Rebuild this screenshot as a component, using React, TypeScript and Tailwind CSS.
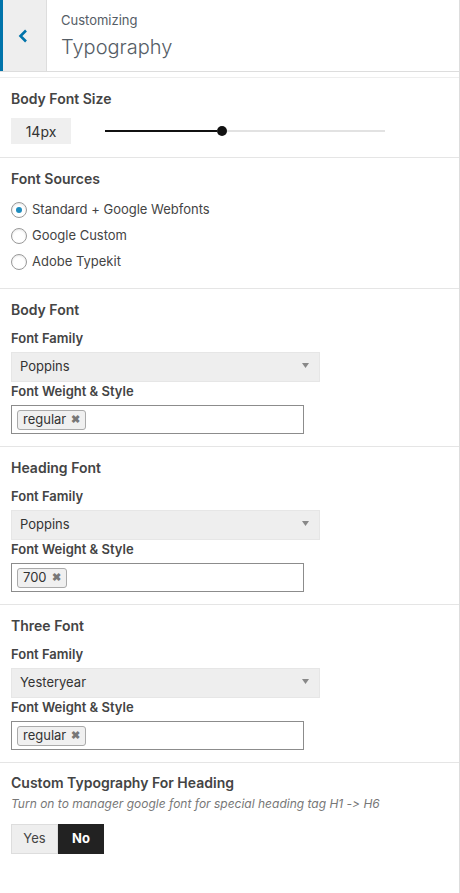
import React from 'react';

const font = { fontFamily: 'Inter, "Liberation Sans", Arial, sans-serif' };

const Tag = ({ label }: { label: string }) => (
  <span className="flex items-center h-[20px] px-[5px] border border-[#aaa] rounded-[3px] bg-[#f0f0f0] text-[13px] text-[#333] leading-none">
    {label}
    <span className="ml-[5px] text-[11px] font-bold text-[#777]">✖</span>
  </span>
);

const FontBlock = ({ title, family, weight }: { title: string; family: string; weight: string }) => (
  <div className="px-[11px] pt-[11px] pb-[12px] border-b border-[#e5e5e5]">
    <div className="text-[14px] leading-[20px] font-semibold text-[#444]">{title}</div>
    <div className="mt-[10px] text-[13px] leading-[16px] font-semibold text-[#444]">Font Family</div>
    <div className="mt-[6px] w-[309px] h-[30px] bg-[#eeeeee] border border-[#e6e6e6] flex items-center justify-between pl-[8px] pr-[10px]">
      <span className="text-[13px] text-[#333]">{family}</span>
      <svg width="7" height="5" viewBox="0 0 7 5" className="-mt-[4px]">
        <path d="M0 0h7L3.5 5z" fill="#888" />
      </svg>
    </div>
    <div className="mt-[1px] text-[13px] leading-[16px] font-semibold text-[#444]">Font Weight &amp; Style</div>
    <div className="mt-[6px] w-[293px] h-[29px] border border-[#8c8c8c] bg-white flex items-center pl-[5px]">
      <Tag label={weight} />
    </div>
  </div>
);

const Radio = ({ label, checked }: { label: string; checked?: boolean }) => (
  <div className="flex items-center h-[26px] pt-[1px]">
    <span className="w-[16px] h-[16px] rounded-full border border-[#999] bg-white flex items-center justify-center shadow-[inset_0_1px_2px_rgba(0,0,0,0.1)]">
      {checked && <span className="w-[6px] h-[6px] rounded-full bg-[#1e8cbe]" />}
    </span>
    <span className="ml-[5px] text-[13px] text-[#444]">{label}</span>
  </div>
);

export default function App() {
  return (
    <div style={font} className="w-[460px] h-[893px] bg-white border-r border-[#ddd] overflow-hidden [font-variant-ligatures:none]">
      {/* header */}
      <div className="h-[72px] flex border-b border-[#ddd]">
        <div className="w-[47px] bg-[#eeeeee] border-l-[3px] border-[#0073aa] border-r border-r-[#ddd] flex items-center justify-center pr-[3px]">
          <svg width="10" height="14" viewBox="0 0 10 14">
            <path d="M8 1.5L2.5 7L8 12.5" fill="none" stroke="#0073aa" strokeWidth="2.6" />
          </svg>
        </div>
        <div className="pl-[14px] pt-[11px]">
          <div className="text-[13px] leading-[18px] text-[#555d66]">Customizing</div>
          <div className="mt-[6px] text-[20px] leading-[24px] font-light text-[#555d66]">Typography</div>
        </div>
      </div>
      <div className="h-[6px] border-b border-[#eee]" />

      {/* body font size */}
      <div className="px-[11px] pt-[11px] pb-[13px] border-b border-[#e5e5e5]">
        <div className="text-[14px] leading-[20px] font-semibold text-[#444]">Body Font Size</div>
        <div className="mt-[9px] flex items-center">
          <div className="w-[60px] h-[26px] bg-[#efefef] flex items-center justify-center text-[14px] text-[#333]">14px</div>
          <div className="ml-[34px] w-[280px] flex items-center">
            <div className="w-[112px] h-[2px] bg-[#111]" />
            <div className="w-[10px] h-[10px] rounded-full bg-[#111] shrink-0" />
            <div className="flex-1 h-[2px] bg-[#e2e2e2]" />
          </div>
        </div>
      </div>

      {/* font sources */}
      <div className="px-[11px] pt-[11px] pb-[14px] border-b border-[#e5e5e5]">
        <div className="text-[14px] leading-[20px] font-semibold text-[#444]">Font Sources</div>
        <div className="mt-[7px]">
          <Radio label="Standard + Google Webfonts" checked />
          <Radio label="Google Custom" />
          <Radio label="Adobe Typekit" />
        </div>
      </div>

      <FontBlock title="Body Font" family="Poppins" weight="regular" />
      <FontBlock title="Heading Font" family="Poppins" weight="700" />
      <FontBlock title="Three Font" family="Yesteryear" weight="regular" />

      {/* custom typography */}
      <div className="px-[11px] pt-[10px]">
        <div className="text-[14px] leading-[20px] font-semibold text-[#444]">Custom Typography For Heading</div>
        <div className="mt-[3px] text-[12px] leading-[16px] italic text-[#777]">
          Turn on to manager google font for special heading tag H1 -&gt; H6
        </div>
        <div className="mt-[12px] flex">
          <div className="w-[47px] h-[30px] bg-[#eeeeee] border border-[#ddd] flex items-center justify-center text-[13px] text-[#444]">Yes</div>
          <div className="w-[46px] h-[30px] bg-[#222] flex items-center justify-center text-[13px] font-bold text-white">No</div>
        </div>
      </div>
    </div>
  );
}
